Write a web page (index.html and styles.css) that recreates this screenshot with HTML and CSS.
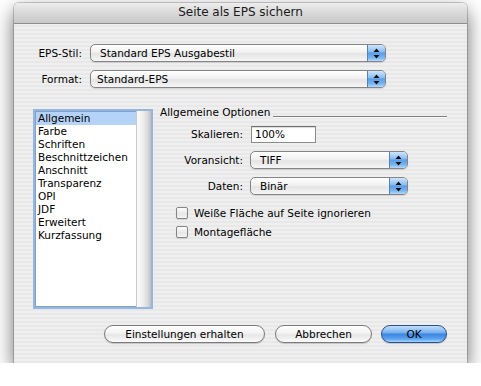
FILE: index.html
```html
<!DOCTYPE html>
<html>

	<head>
		<meta charset="UTF-8">
		<title>Seite als EPS sichern</title>
		<link rel="stylesheet" href="styles.css">
	</head>

	<body>
		<div class="window">
			<div class="titlebar">Seite als EPS sichern</div>
			<div class="content">
				<div class="topForm">
					<label class="lbl">EPS-Stil:</label>
					<div class="popup"><span class="val">Standard EPS Ausgabestil</span><span class="arrows"><svg width="7" height="11" viewBox="0 0 7 11"><path d="M3.5 0.5 L6.5 4 L0.5 4 Z M3.5 10.5 L6.5 7 L0.5 7 Z" fill="#111"/></svg></span></div>
					<label class="lbl">Format:</label>
					<div class="popup"><span class="val val2">Standard-EPS</span><span class="arrows"><svg width="7" height="11" viewBox="0 0 7 11"><path d="M3.5 0.5 L6.5 4 L0.5 4 Z M3.5 10.5 L6.5 7 L0.5 7 Z" fill="#111"/></svg></span></div>
				</div>

				<div class="main">
					<div class="listBox">
						<ul class="items">
							<li class="current">Allgemein</li>
							<li>Farbe</li>
							<li>Schriften</li>
							<li>Beschnittzeichen</li>
							<li>Anschnitt</li>
							<li>Transparenz</li>
							<li>OPI</li>
							<li>JDF</li>
							<li>Erweitert</li>
							<li>Kurzfassung</li>
						</ul>
						<div class="scroll"></div>
					</div>

					<div class="panel">
						<div class="groupHead"><span>Allgemeine Optionen</span><i class="rule"></i></div>
						<div class="options">
							<label class="lbl">Skalieren:</label>
							<div class="field"><div class="input">100%</div></div>
							<label class="lbl">Voransicht:</label>
							<div class="popup small"><span class="val">TIFF</span><span class="arrows"><svg width="7" height="11" viewBox="0 0 7 11"><path d="M3.5 0.5 L6.5 4 L0.5 4 Z M3.5 10.5 L6.5 7 L0.5 7 Z" fill="#111"/></svg></span></div>
							<label class="lbl">Daten:</label>
							<div class="popup small"><span class="val">Binär</span><span class="arrows"><svg width="7" height="11" viewBox="0 0 7 11"><path d="M3.5 0.5 L6.5 4 L0.5 4 Z M3.5 10.5 L6.5 7 L0.5 7 Z" fill="#111"/></svg></span></div>
						</div>
						<div class="checks">
							<div class="check"><span class="box"></span>Weiße Fläche auf Seite ignorieren</div>
							<div class="check"><span class="box"></span>Montagefläche</div>
						</div>
					</div>
				</div>

				<div class="buttons">
					<a class="btn w161">Einstellungen erhalten</a>
					<a class="btn w97">Abbrechen</a>
					<a class="btn ok">OK</a>
				</div>
			</div>
		</div>
	</body>

</html>
```

FILE: styles.css
```css
* {
	margin: 0;
	padding: 0;
	list-style: none;
	box-sizing: border-box;
}

body {
	background: #fff;
	font-family: "DejaVu Sans", "Liberation Sans", sans-serif;
	font-size: 10.5px;
	color: #000;
}

.window {
	width: 453px;
	height: 360px;
	margin: 3px 0 0 14px;
	border-radius: 5px 5px 0 0;
	overflow: hidden;
	box-shadow: 0 0 0 1px rgba(0, 0, 0, .18), 0 8px 20px rgba(0, 0, 0, .6);
	background: repeating-linear-gradient(#efefef 0, #efefef 2px, #e8e8e8 2px, #e8e8e8 4px);
}

.titlebar {
	height: 21px;
	line-height: 19px;
	text-align: center;
	font-size: 12px;
	color: #1a1a1a;
	background: linear-gradient(#ededed, #d9d9d9 50%, #c8c8c8);
	border-bottom: 1px solid #8e8e8e;
}

.content {
	padding-top: 20px;
}

/* obere Zeilen */
.topForm {
	display: grid;
	grid-template-columns: 48px 296px;
	column-gap: 8px;
	row-gap: 8px;
	margin-left: 20px;
}

.lbl {
	text-align: right;
	align-self: center;
	line-height: 13px;
}

.popup {
	display: flex;
	height: 18px;
	border: 1px solid #858585;
	border-radius: 5px;
	background: linear-gradient(#ffffff, #f1f1f1 45%, #e4e4e4 55%, #f6f6f6);
	box-shadow: 0 1px 1px rgba(0, 0, 0, .12);
	overflow: hidden;
}

.popup .val {
	flex: 1;
	line-height: 16px;
	padding-left: 9px;
}

.popup .val2 {
	padding-left: 6px;
}

.popup .arrows {
	width: 18px;
	display: flex;
	align-items: center;
	justify-content: center;
	border-left: 1px solid #5a7fb5;
	background: linear-gradient(#cfe4fb, #8ec0f2 40%, #5c9ce6 50%, #78b5f0 80%, #b6dafc);
}

.popup.small {
	width: 158px;
}

/* Hauptbereich */
.main {
	display: flex;
	align-items: flex-start;
	margin: 18px 0 0 19px;
}

.listBox {
	display: flex;
	width: 120px;
	height: 200px;
	margin-top: 3px;
	border: 2px solid #95b7df;
	box-shadow: inset 0 0 0 1px #7fa1cb;
	background: #fff;
}

.items {
	flex: 1;
	padding: 1px 0 0 1px;
}

.items li {
	height: 13px;
	line-height: 13px;
	padding-left: 2px;
}

.items li.current {
	background: #b5d3f7;
}

.scroll {
	width: 15px;
	border-left: 1px solid #c9c9c9;
	background: linear-gradient(to right, #fbfbfb, #efefef 40%, #d6d6d6 80%, #bdbdbd);
}

.panel {
	width: 287px;
	margin-left: 7px;
}

.groupHead {
	display: flex;
	align-items: flex-end;
	line-height: 13px;
}

.groupHead .rule {
	flex: 1;
	height: 1px;
	margin: 0 0 2px 3px;
	background: #7d7d7d;
	box-shadow: 0 1px 0 #fafafa;
}

.options {
	display: grid;
	grid-template-columns: 83px 1fr;
	grid-auto-rows: 18px;
	column-gap: 7px;
	row-gap: 8px;
	margin-top: 6px;
}

.field {
	display: flex;
	align-items: center;
}

.input {
	width: 65px;
	height: 17px;
	margin-left: 1px;
	line-height: 15px;
	padding-left: 3px;
	border: 1px solid #8b8b8b;
	border-top-color: #6f6f6f;
	background: #fff;
	box-shadow: inset 0 1px 1px rgba(0, 0, 0, .15);
}

.checks {
	margin-top: 8px;
	padding-left: 16px;
}

.check {
	display: flex;
	align-items: center;
	height: 19px;
}

.check .box {
	width: 12px;
	height: 12px;
	margin-right: 6px;
	border: 1px solid #858585;
	border-radius: 2px;
	background: linear-gradient(#fdfdfd, #e6e6e6 60%, #f4f4f4);
	box-shadow: 0 1px 1px rgba(0, 0, 0, .12);
}

/* Schaltflächen */
.buttons {
	display: flex;
	justify-content: flex-end;
	margin-top: 16px;
	padding-right: 20px;
}

.btn {
	height: 18px;
	line-height: 16px;
	margin-left: 9px;
	text-align: center;
	border: 1px solid #7a7a7a;
	border-radius: 9px;
	background: linear-gradient(#ffffff, #f3f3f3 45%, #e6e6e6 55%, #fbfbfb);
	box-shadow: 0 1px 1px rgba(0, 0, 0, .18);
	cursor: pointer;
}

.btn.w161 {
	width: 161px;
	margin-left: 0;
}

.btn.w97 {
	width: 97px;
	margin-left: 10px;
}

.btn.ok {
	width: 66px;
	border-color: #2a4f8f;
	background: linear-gradient(#c3defc, #7ab3f0 40%, #3f86e0 52%, #5aa2ee 80%, #a8d5fb);
}
```
